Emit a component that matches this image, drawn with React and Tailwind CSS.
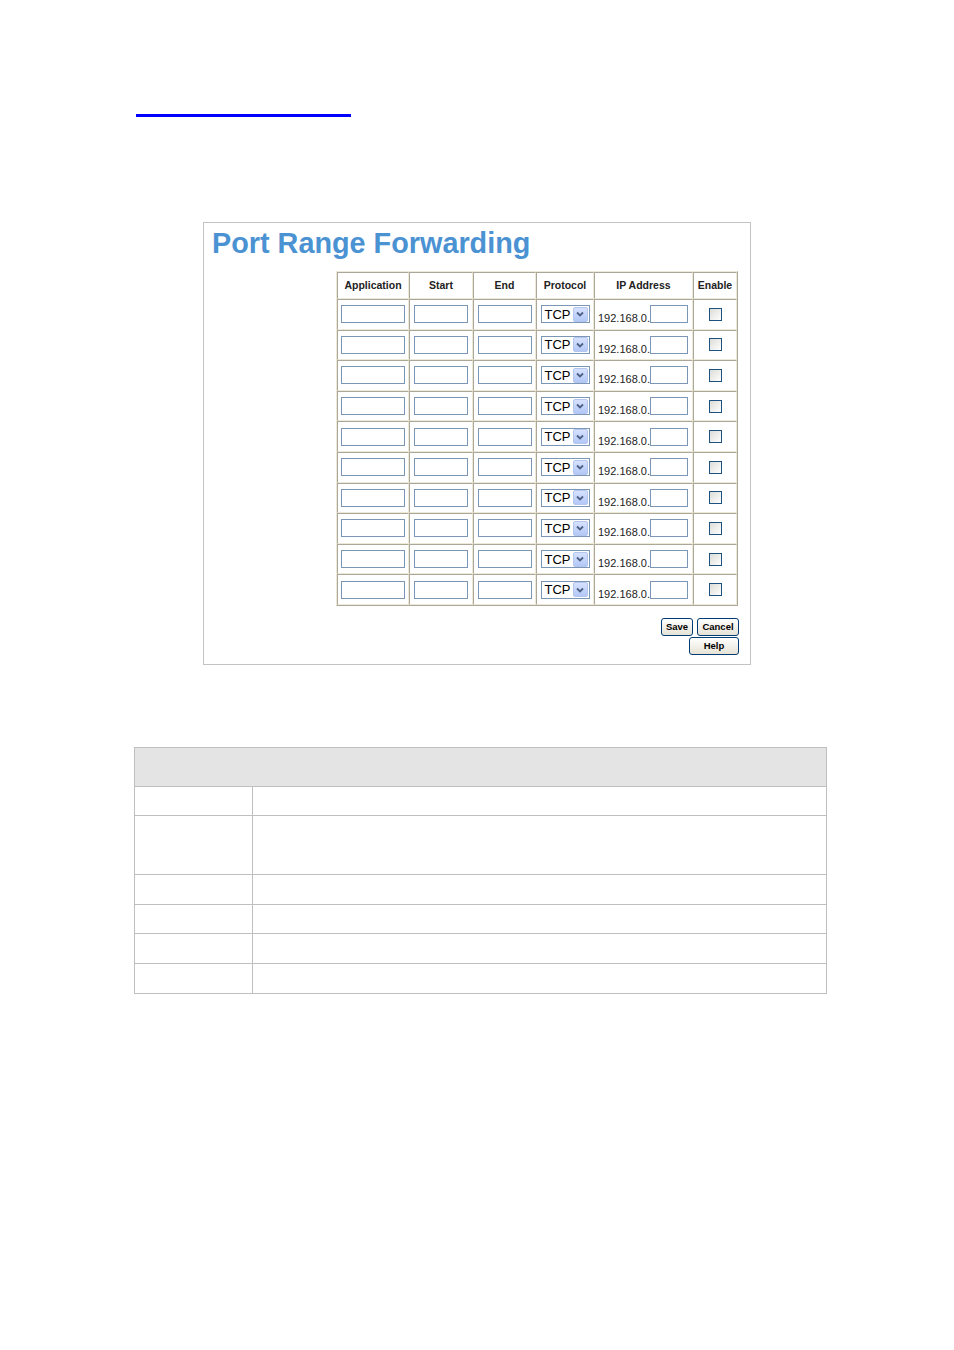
import React from "react";

const FONT = { fontFamily: '"Liberation Sans", Arial, sans-serif' };

function TextBox({ w }) {
  return <div className={`${w} h-[18px] border border-[#7b97b5] bg-white`} />;
}

function Select() {
  return (
    <div className="w-[49px] h-[18px] border border-[#7b97b5] bg-white flex items-center justify-between pl-[3px] pr-[1px]">
      <span className="text-[13px] leading-[13px] text-black">TCP</span>
      <span className="w-[15px] h-[15px] rounded-[2px] border border-[#b4c6ee] bg-gradient-to-b from-[#d6e1fd] to-[#b3c8f7] flex items-center justify-center">
        <svg width="8" height="6" viewBox="0 0 8 6">
          <path d="M1 1.5 L4 4.5 L7 1.5" fill="none" stroke="#4d6185" strokeWidth="1.8" />
        </svg>
      </span>
    </div>
  );
}

function Checkbox() {
  return <div className="w-[13px] h-[13px] border border-[#1c5180] bg-gradient-to-br from-[#dcdcd7] to-white" />;
}

function Cell({ children, className = "" }) {
  return (
    <div
      className={`border border-t-[#aca899] border-l-[#aca899] border-r-[#ece9d8] border-b-[#ece9d8] flex items-center ${className}`}
    >
      {children}
    </div>
  );
}

function Btn({ w, children }) {
  return (
    <div
      className={`${w} h-[18px] rounded-[3px] border border-[#003c74] bg-gradient-to-b from-white to-[#e6e3d6] flex items-center justify-center text-[9.5px] font-bold text-black leading-none`}
    >
      {children}
    </div>
  );
}

export default function App() {
  const rows = Array.from({ length: 10 });
  const headers = ["Application", "Start", "End", "Protocol", "IP Address", "Enable"];
  const descRows = [29, 59, 30, 29, 30, 30];
  return (
    <div className="w-[954px] min-h-[1350px] bg-white pt-[114px]" style={FONT}>
      <div className="ml-[136px] w-[215px] h-[3px] bg-[#0000ff]" />

      <div className="ml-[203px] mt-[105px] w-[548px] border border-[#c3c3c3] pb-[9px]">
        <div className="ml-[8px] mt-[4px] text-[28.8px] leading-[33px] font-bold text-[#4b92d3]">
          Port Range Forwarding
        </div>

        <div className="ml-[132px] mt-[11px] w-[402px] border border-t-[#ece9d8] border-l-[#ece9d8] border-r-[#aca899] border-b-[#aca899]">
          <div className="grid grid-cols-[72px_64px_63px_58px_99px_44px]">
            {headers.map((h) => (
              <Cell key={h} className="h-[27px] justify-center">
                <span className="text-[10.5px] font-bold text-[#222] leading-none">{h}</span>
              </Cell>
            ))}
            {rows.map((_, i) => (
              <React.Fragment key={i}>
                <Cell className="h-[30.6px] justify-center">
                  <TextBox w="w-[64px]" />
                </Cell>
                <Cell className="h-[30.6px] justify-center">
                  <TextBox w="w-[54px]" />
                </Cell>
                <Cell className="h-[30.6px] justify-center">
                  <TextBox w="w-[54px]" />
                </Cell>
                <Cell className="h-[30.6px] justify-center">
                  <Select />
                </Cell>
                <Cell className="h-[30.6px] pl-[3px]">
                  <div className="flex items-end">
                    <span className="text-[11px] leading-[10px] text-[#222]">192.168.0.</span>
                    <TextBox w="w-[38px]" />
                  </div>
                </Cell>
                <Cell className="h-[30.6px] justify-center">
                  <Checkbox />
                </Cell>
              </React.Fragment>
            ))}
          </div>
        </div>

        <div className="mt-[12px] mr-[11px] flex flex-col items-end">
          <div className="flex gap-[4px]">
            <Btn w="w-[32px]">Save</Btn>
            <Btn w="w-[42px]">Cancel</Btn>
          </div>
          <div className="mt-[1px]">
            <Btn w="w-[50px]">Help</Btn>
          </div>
        </div>
      </div>

      <div className="ml-[134px] mt-[82px] w-[693px] border-x border-b border-[#bfbfbf]">
        <div className="h-[39px] border-t border-[#bfbfbf] bg-[#e4e4e4]" />
        {descRows.map((h, i) => (
          <div key={i} className="flex border-t border-[#bfbfbf]" style={{ height: h }}>
            <div className="w-[118px] border-r border-[#bfbfbf]" />
            <div className="flex-1" />
          </div>
        ))}
      </div>
    </div>
  );
}
